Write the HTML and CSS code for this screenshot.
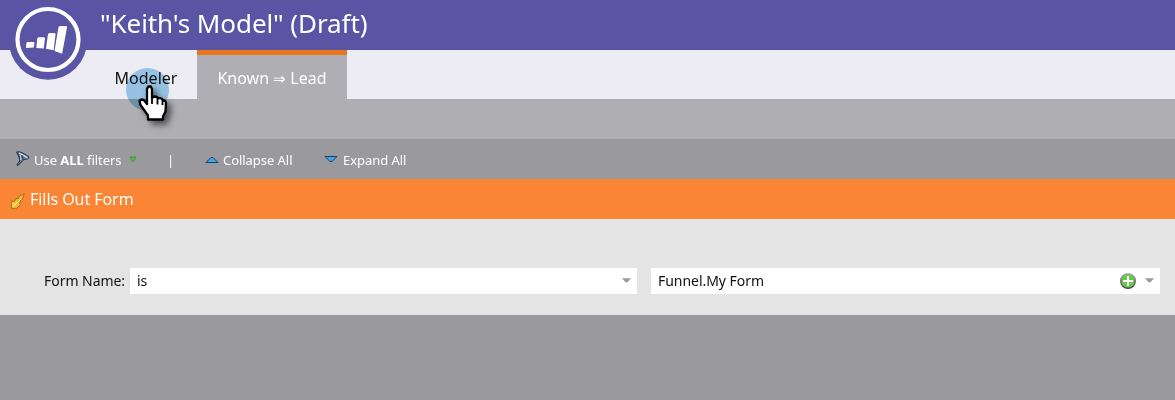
FILE: index.html
```html
<!DOCTYPE html>
<html lang="en">
<head>
<meta charset="utf-8">
<title>Keith's Model</title>
<link rel="stylesheet" href="styles.css">
</head>
<body>
<header class="header">
  <h1 class="title">"Keith's Model" (Draft)</h1>
  <svg class="logo" width="80" height="80" viewBox="0 0 80 80">
    <circle cx="40" cy="40.500" r="39.200" fill="#5a54a4"/>
    <circle cx="40" cy="39.500" r="30.500" fill="none" stroke="#fff" stroke-width="4.200"/>
    <path fill="#fff" d="M19.500 42h6.300l.7.800-.7 4.700-7.800.5.400-5.200zM30.500 37.300h5.700l.8.900-1.300 10.400-7.400-.6 1-9.700zM41.500 33h5.300l.8.900-2 16.400-7.600-1.500 2-14.800zM52 26h6.200l.9 1-5 26.700-7.600-2.600L50.500 27z"/>
  </svg>
</header>
<nav class="tabs">
  <a class="tab">Modeler</a>
  <a class="tab active">Known <span class="implies">⇒</span> Lead</a>
</nav>
<div class="band"></div>
<div class="toolbar">
  <svg class="funnel" width="16" height="18" viewBox="0 0 16 18">
    <path d="M1.500 2C5 .8 10 4 14 7c-.3 1.500-1 2-2 2-2.500.2-4.500 1.200-5.300 3l-4.200 3.700-.5-1.200 2.700-3.500C4.800 8 3.500 6 1.500 2z" fill="#617b98" stroke="#26344d"/>
    <path d="M4 3c2.500 1 5.500 2.800 8.500 5M5 5l1 5" stroke="#dce7f2" stroke-width="1.100" fill="none"/>
    <path d="M7 5l1 5M2.500 3l2.500 5" stroke="#263954" fill="none"/>
  </svg>
  <span class="filters">Use <b>ALL</b> filters</span>
  <svg class="green" width="8" height="7" viewBox="0 0 8 7"><path d="M1 1h6L5.500 4.300 4 6 2.500 4z" fill="#55bd3d" stroke="#388b30" stroke-width=".8"/></svg>
  <span class="divider">|</span>
  <svg class="up" width="14" height="9" viewBox="0 0 14 9"><path d="M1 7.500L6 2.500h2l5 5z" fill="#42a5e8" stroke="#153e61"/></svg>
  <span class="collapse">Collapse All</span>
  <svg class="down" width="14" height="9" viewBox="0 0 14 9"><path d="M1 1.500h12l-5 5H6z" fill="#42a5e8" stroke="#153e61"/></svg>
  <span class="expand">Expand All</span>
</div>
<div class="trigger">
  <svg class="arrow" width="16" height="18" viewBox="0 0 16 18">
    <path d="M14.300 1.700L12.300 7.500l-1.300.5-1.500 3.200 1.300 1.300-4.300 3.800-5 .2.200-8 2.200 1.500 3.200-4.300.8 1.300L10.500 3l.8.700z" fill="#f0bd35" stroke="#a36e19" stroke-width=".9"/>
    <path d="M3 10.500v4l4-4M5 13l6-6" stroke="#ffef99" fill="none"/>
  </svg>
  <span>Fills Out Form</span>
</div>
<div class="form">
  <label class="label">Form Name:</label>
  <div class="field operator"><span>is</span><svg class="caret" width="9" height="5"><path d="M0 .300h9L5.500 4.300h-2z" fill="#999"/></svg></div>
  <div class="field value"><span>Funnel.My Form</span>
    <svg class="plus" width="18" height="18" viewBox="0 0 18 18">
      <defs><linearGradient id="rim" x2="0" y2="1"><stop stop-color="#aaa9b0"/><stop offset="1" stop-color="#43424b"/></linearGradient></defs>
      <circle cx="9" cy="9" r="7.300" fill="#65c94b" stroke="url(#rim)" stroke-width="1.500"/>
      <path d="M9 4v10M4 9h10" stroke="#fff" stroke-width="2"/>
    </svg>
    <svg class="caret" width="9" height="5"><path d="M0 .300h9L5.500 4.300h-2z" fill="#999"/></svg>
  </div>
</div>
<div class="click"></div>
<svg class="cursor" width="42" height="48" viewBox="0 0 42 48">
  <path d="M12 35.500v-4L4.500 21l-1-4 1.800-1.500 2.500.5 3.200 4V5l1.200-2.500h2.600L16 5v9l2-1.500 3 .5 1 1.500 2-.5 2.200 1 .8 1.500 2 .2 1 1.800-.5 9-2.500 5v3z" fill="#fff" stroke="#000" stroke-width="2.300" stroke-linejoin="round"/>
  <path d="M16 13v7M21.500 14.500v6M26.500 16v5" stroke="#000" stroke-width="1.800"/>
</svg>
</body>
</html>
```
FILE: styles.css
```css
body { margin: 0; height: 400px; overflow: hidden; background: #9a999e; font-family: "Noto Sans", sans-serif; color: #111; position: relative; }
svg { flex: none; display: block; }
.header { height: 50px; background: #5a54a4; position: relative; }
.title { margin: 0; padding-left: 100px; font-size: 26px; font-weight: 400; line-height: 47px; letter-spacing: -.08px; color: #fff; white-space: nowrap; }
.logo { position: absolute; left: 7.500px; top: 0; }
.tabs { display: flex; height: 49px; background: #edebf3; padding-left: 95px; }
.tab { box-sizing: border-box; width: 102px; text-align: center; font-size: 16px; line-height: 46px; padding-top: 5px; white-space: nowrap; }
.active { width: 150px; border-top: 5px solid #ea761b; padding: 0; background: #afaeb3; color: #fff; }
.implies { font-size: 15px; }
.band { height: 40px; background: #afaeb3; }
.toolbar { display: flex; align-items: center; height: 40px; padding: 0 0 0 15px; color: #fff; font-size: 13px; line-height: 20px; letter-spacing: -.05px; white-space: nowrap; }
.toolbar span { padding-top: 2px; }
.filters { margin-left: 3px; width: 88px; }
.green { margin-left: 7px; }
.divider { margin-left: 30px; width: 38px; }
.collapse { margin-left: 4px; width: 70px; }
.down { margin-left: 31px; }
.expand { margin-left: 5px; }
.trigger { display: flex; align-items: center; height: 40px; background: #fa8534; color: #fff; font-size: 16px; letter-spacing: -.06px; padding-left: 10px; gap: 4px; }
.arrow { margin-top: 4px; }
.form { display: flex; box-sizing: border-box; height: 96px; padding: 49px 15px 21px 44px; background: #e4e4e4; font-size: 14px; line-height: 26px; letter-spacing: -.04px; white-space: nowrap; }
.label { width: 86px; }
.field { box-sizing: border-box; display: flex; align-items: center; height: 26px; background: #fff; padding: 0 6px 0 7px; }
.field span { flex: 1; }
.caret { margin-top: -2px; }
.operator { width: 507px; margin-right: 14px; }
.value { width: 509px; }
.plus { margin-right: 8px; }
.click { position: absolute; left: 126px; top: 68px; width: 43px; height: 43px; border-radius: 50%; background: #a2d2ee; mix-blend-mode: multiply; }
.cursor { position: absolute; left: 136px; top: 84px; filter: drop-shadow(4px 4px 3px rgba(0, 0, 0, .55)); overflow: visible; }
```
